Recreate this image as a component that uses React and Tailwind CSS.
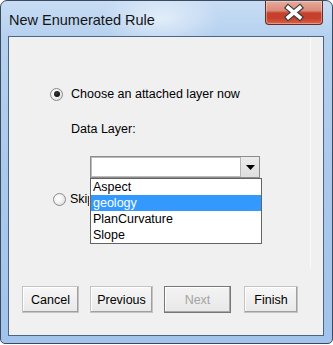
function Radio({ checked }) {
  return (
    <span className="w-[13px] h-[13px] rounded-full border border-[#8a8b8c] bg-[radial-gradient(circle_at_40%_40%,#ffffff_0%,#f2f2f2_45%,#cfcfcf_100%)] flex items-center justify-center shrink-0">
      {checked && (
        <span className="w-[6px] h-[6px] rounded-full bg-[radial-gradient(circle_at_40%_35%,#3a3a3a,#000000)]" />
      )}
    </span>
  );
}

export default function App() {
  return (
    <div className="w-[333px] h-[345px] bg-white">
      <div className="w-[333px] h-[344px] rounded-t-[7px] rounded-b-[5px] border border-[#3b4b5e] bg-[linear-gradient(180deg,#c8ddf4_0%,#b6d1ef_10%,#abc9ec_50%,#a2c3eb_100%)] flex flex-col font-['Liberation_Sans',Arial,sans-serif] overflow-hidden">
        {/* title bar */}
        <div className="h-[35px] flex justify-between items-start bg-[radial-gradient(ellipse_60px_30px_at_160px_18px,rgba(255,255,255,0.55),rgba(255,255,255,0))]">
          <span className="pl-[8px] pt-[10px] text-[14.5px] leading-[18px] text-[#141414]">
            New Enumerated Rule
          </span>
          <div className="mr-[9px] w-[58px] h-[24px] rounded-b-[4px] border border-[#6a2a22] border-t-0 bg-[linear-gradient(180deg,#e7ab9c_0%,#da8a78_42%,#c6412d_52%,#c53f2b_75%,#db6247_100%)] shadow-[inset_0_0_0_1px_rgba(255,255,255,0.35)] flex items-center justify-center">
            <svg width="58" height="24" viewBox="0 0 58 24">
              <g strokeLinecap="square">
                <path d="M23 6.5 L35 16.5 M35 6.5 L23 16.5" stroke="#3b3b3b" strokeWidth="6.2" />
                <path d="M23 6.5 L35 16.5 M35 6.5 L23 16.5" stroke="#ffffff" strokeWidth="3.8" />
              </g>
            </svg>
          </div>
        </div>

        {/* client area */}
        <div className="ml-[7px] w-[316px] h-[300px] border border-[#4a6585] bg-[#f0f0f0] flex flex-col text-[12.5px] leading-[16px] text-black">
          <div className="w-[302px] h-[231px] border-r border-[#fbfbfb] flex flex-col">
            <div className="mt-[49px] h-[16px] flex items-center pl-[41px] gap-[8px]">
              <Radio checked />
              <span>Choose an attached layer now</span>
            </div>
            <div className="mt-[19px] h-[16px] flex items-center pl-[62px]">
              <span>Data Layer:</span>
            </div>
            <div className="mt-[19px] ml-[81px] relative w-[170px] h-[22px] border border-[#8c8c8c] bg-white shadow-[inset_0_0_0_1px_#bdbdbd] flex justify-end z-10">
              <div className="w-[19px] h-[20px] bg-[linear-gradient(180deg,#ececec,#dedede)] border-l border-[#b5b5b5] flex items-center justify-center">
                <svg width="9" height="5" viewBox="0 0 9 5">
                  <path d="M0 0 H9 L4.5 5 Z" fill="#000" />
                </svg>
              </div>
              <div className="absolute left-[-1px] top-[21px] w-[172px] border border-[#646464] bg-white flex flex-col">
                <div className="h-[16px] pl-[2px] flex items-center">Aspect</div>
                <div className="h-[16px] pl-[2px] flex items-center bg-[#3399ff] text-white">geology</div>
                <div className="h-[16px] pl-[2px] flex items-center">PlanCurvature</div>
                <div className="h-[16px] pl-[2px] flex items-center">Slope</div>
              </div>
            </div>
            <div className="mt-[13px] h-[16px] flex items-center pl-[44px] gap-[4px] whitespace-nowrap">
              <Radio />
              <span className="w-[19px] overflow-hidden">Skip this step for now</span>
            </div>
          </div>

          <div className="mt-[18px] pl-[13px] flex">
            <div className="w-[57px] h-[27px] flex items-center justify-center bg-[linear-gradient(180deg,#f6f6f6,#e9e9e9)] border border-[#c4c4c4] shadow-[inset_-1px_-1px_0_#9f9f9f,inset_1px_1px_0_#ffffff]">
              Cancel
            </div>
            <div className="ml-[11px] w-[63px] h-[27px] flex items-center justify-center bg-[linear-gradient(180deg,#f6f6f6,#e9e9e9)] border border-[#c4c4c4] shadow-[inset_-1px_-1px_0_#9f9f9f,inset_1px_1px_0_#ffffff]">
              Previous
            </div>
            <div className="ml-[11px] w-[67px] h-[27px] flex items-center justify-center bg-[linear-gradient(180deg,#f3f3f3,#e8e8e8)] border border-[#777777] shadow-[inset_-1px_-1px_0_#a8a8a8,inset_1px_1px_0_#ffffff] text-[#a3a3a3]">
              Next
            </div>
            <div className="ml-[13px] w-[54px] h-[27px] flex items-center justify-center bg-[linear-gradient(180deg,#f6f6f6,#e9e9e9)] border border-[#c4c4c4] shadow-[inset_-1px_-1px_0_#9f9f9f,inset_1px_1px_0_#ffffff]">
              Finish
            </div>
          </div>
        </div>
      </div>
    </div>
  );
}
